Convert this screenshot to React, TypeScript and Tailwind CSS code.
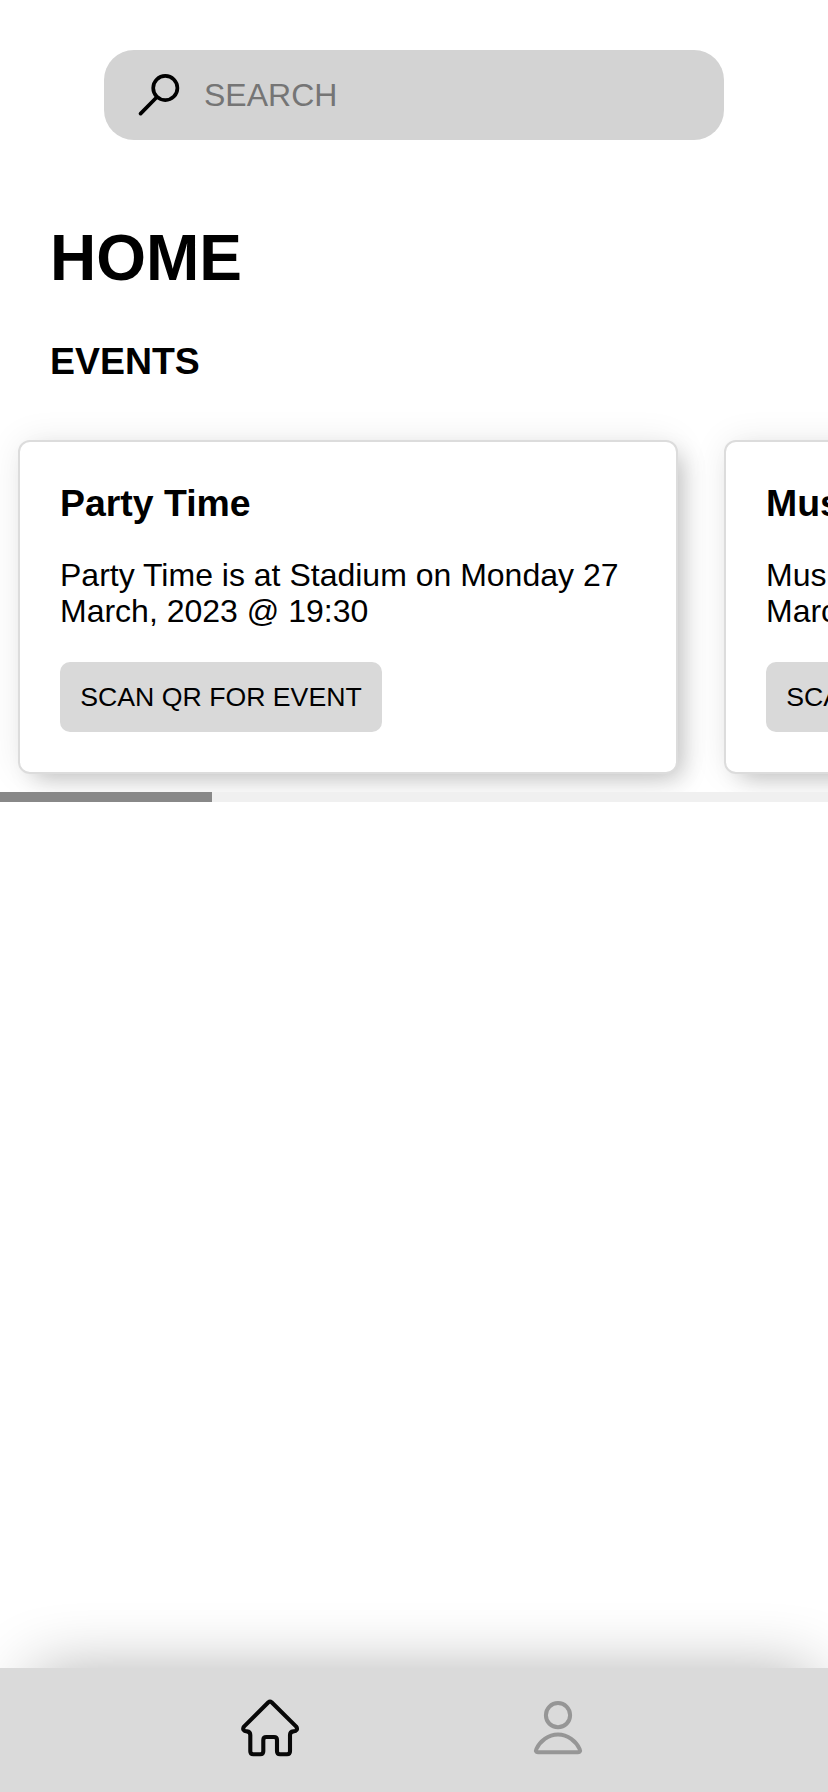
type EventItem = { title: string; text: string };

const events: EventItem[] = [
  { title: "Party Time", text: "Party Time is at Stadium on Monday 27 March, 2023 @ 19:30" },
  { title: "Music Fest", text: "Music Fest is at Stadium on Monday 27 March, 2023 @ 19:30" },
];

function SearchIcon() {
  return (
    <svg className="h-11 w-11 shrink-0" viewBox="0 0 44 44" fill="none" stroke="#000" strokeWidth="3.7" strokeLinecap="round">
      <circle cx="27.3" cy="15" r="12.1" />
      <path d="M18.7 24.3 2.6 40.6" />
    </svg>
  );
}

function HomeIcon() {
  return (
    <svg className="h-[100px] w-[100px]" viewBox="0 0 100 100" fill="none" stroke="#080808" strokeWidth="4.1" strokeLinejoin="round">
      <path d="M48.4 22.3Q50 20.9 51.6 22.3L76 46.4Q77.6 48.3 76.6 50Q75.8 51.3 73.4 51.4Q70 51.8 70 55V71.2Q70 74.2 67 74.2H60Q57 74.2 57 71.2V60Q57 57 54 57H46.3Q43.3 57 43.3 60V71.2Q43.3 74.2 40.3 74.2H33.3Q30.3 74.2 30.3 71.2V55Q30.3 51.8 26.9 51.4Q24.4 51.3 23.6 50Q22.6 48.3 24.2 46.4Z" />
    </svg>
  );
}

function UserIcon() {
  return (
    <svg className="h-[100px] w-[100px]" viewBox="0 0 100 100" fill="none" stroke="#969696" strokeWidth="4" strokeLinejoin="round">
      <circle cx="48" cy="35.2" r="12.1" />
      <path d="M28 72.2H68Q71 72.2 69.6 69C66 61.5 58 54.6 48 54.6S30 61.5 26.4 69Q25 72.2 28 72.2Z" />
    </svg>
  );
}

function EventCard({ title, text }: EventItem) {
  return (
    <article className="w-[660px] shrink-0 rounded-xl border-2 border-[#dcdcdc] bg-white p-10 shadow-[10px_10px_24px_-6px_rgba(0,0,0,0.22),0px_0px_36px_-2px_rgba(0,0,0,0.09)]">
      <h3 className="text-[37.44px] leading-[42px] font-bold">{title}</h3>
      <p className="mt-[33px] text-[32px] leading-9">{text}</p>
      <button className="mt-[33px] flex h-[70px] w-[322px] items-center justify-center rounded-[10px] bg-[#d9d9d9] text-[26.67px] leading-[30px] whitespace-nowrap">
        SCAN QR FOR EVENT
      </button>
    </article>
  );
}

export default function App() {
  return (
    <div className="flex h-[1792px] w-[828px] flex-col overflow-hidden bg-white font-['Liberation_Sans',Arial,sans-serif] text-black">
      <label className="mx-auto mt-[50px] flex h-[90px] w-[620px] shrink-0 items-center rounded-[30px] bg-[#d3d3d3] pl-[34px]">
        <SearchIcon />
        <input
          placeholder="SEARCH"
          className="ml-[22px] h-9 w-[400px] bg-transparent text-[32px] leading-9 outline-none placeholder:text-[#757575]"
        />
      </label>
      <h1 className="mt-[81px] ml-[50px] text-[64px] leading-[74px] font-bold">HOME</h1>
      <h2 className="mt-[45px] ml-[50px] text-[37.44px] leading-[42px] font-bold">EVENTS</h2>
      <section className="flex shrink-0 gap-[46px] overflow-hidden pt-[58px] pb-[18px] pl-[18px]">
        {events.map((event) => (
          <EventCard key={event.title} {...event} />
        ))}
      </section>
      <div className="h-2.5 w-full shrink-0 bg-[#f0f0f0]">
        <div className="h-full w-[212px] bg-[#888888]" />
      </div>
      <nav className="mt-auto flex h-[124px] shrink-0 items-center justify-center gap-[190px] bg-[#dadada] pl-0.5 shadow-[10px_-20px_66px_-24px_rgba(0,0,0,0.32)]">
        <HomeIcon />
        <UserIcon />
      </nav>
    </div>
  );
}
